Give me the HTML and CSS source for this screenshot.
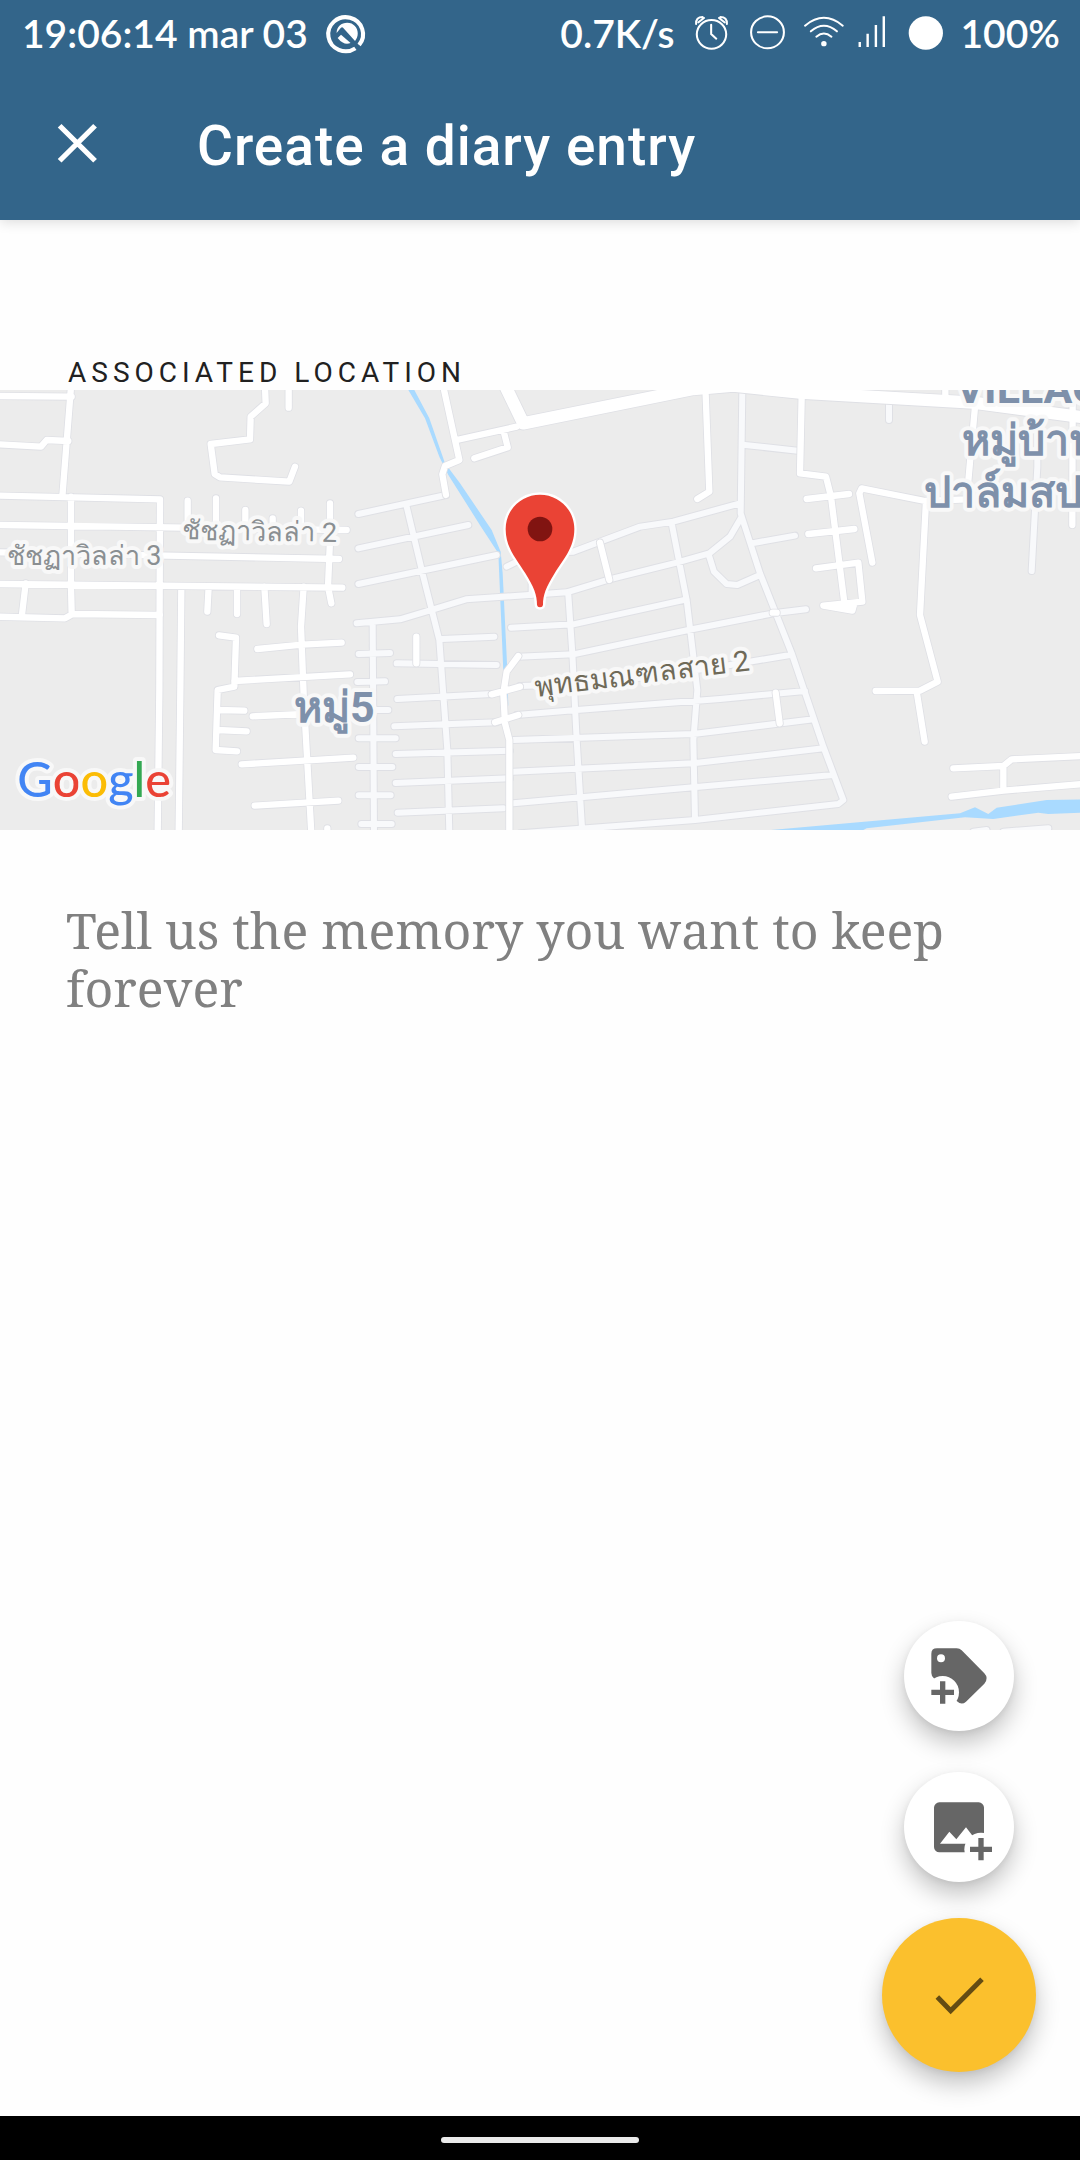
FILE: index.html
```html
<!DOCTYPE html>
<html lang="en">
<head>
<meta charset="utf-8">
<meta name="viewport" content="width=device-width, initial-scale=1">
<title>Create a diary entry</title>
<link rel="stylesheet" href="styles.css">
</head>
<body>
<header class="header">
  <div class="status">
    <span>19:06:14 mar 03</span>
    <svg class="status-icon" width="44" height="66" viewBox="945 0 129 198" preserveAspectRatio="none" aria-hidden="true">
      <path d="M1034 145A51 51 0 1 1 1045 135" fill="none" stroke="#fff" stroke-width="12"/>
      <path d="M979 99C979 80 993 68 1010 68C1029 68 1041 83 1041 100C1041 109 1038 117 1033 123L998 83Q995 80 991 84L979 99Z" fill="#fff"/>
      <path d="M982 114L992 104L1020 129Q1001 138 982 114Z" fill="#fff"/>
      <path d="M1026 126L1044 146" stroke="#33658a" stroke-width="7"/>
    </svg>
    <div class="status-right">
      <span>0.7K/s</span>
      <svg class="status-icon" width="39" height="66" viewBox="444 0 114 198" preserveAspectRatio="none" aria-hidden="true">
        <g fill="none" stroke="#fff" stroke-width="6" stroke-linecap="round"><circle cx="501" cy="103" r="43"/><path d="M500 74V102L515 116M456 72Q455 51 475 51M546 72Q547 51 527 51M463 67L479 54M539 67L523 54"/></g>
      </svg>
      <svg class="status-icon" width="39" height="66" viewBox="606 0 114 198" preserveAspectRatio="none" aria-hidden="true">
        <g fill="none" stroke="#fff" stroke-width="6" stroke-linecap="round"><circle cx="663" cy="97" r="48"/><path d="M635 97H691"/></g>
      </svg>
      <svg class="status-icon" width="36" height="66" viewBox="768 0 105 198" preserveAspectRatio="none" aria-hidden="true">
        <g fill="none" stroke="#fff" stroke-width="6" stroke-linecap="round"><path d="M771 77Q826 30 881 77M788 94Q826 61 864 94M804 110Q826 91 848 110"/></g><circle cx="826" cy="131" r="8" fill="#fff"/>
      </svg>
      <svg class="status-icon" width="34" height="66" viewBox="921 0 99 198" preserveAspectRatio="none" aria-hidden="true">
        <path d="M929 126V141M952 101V141M976 75V141M999 49V141" stroke="#fff" stroke-width="7"/>
      </svg>
      <svg class="status-icon" width="36" height="66" viewBox="1068 0 105 198" preserveAspectRatio="none" aria-hidden="true">
        <circle cx="1120" cy="99" r="50" fill="#fff"/>
      </svg>
      <span>100%</span>
    </div>
  </div>
  <div class="toolbar">
    <button class="close" type="button" aria-label="Close">
      <svg width="50" height="48" viewBox="151 357 144 144" preserveAspectRatio="none"><path d="M173 377L275 482M275 377L173 482" stroke="#fff" stroke-width="15"/></svg>
    </button>
    <h1 class="title">Create a diary entry</h1>
  </div>
</header>
<main class="content">
  <h2 class="overline">ASSOCIATED LOCATION</h2>
  <svg class="map" viewBox="0 150 3240 1320" preserveAspectRatio="xMidYMid slice" role="img" aria-label="Map of the associated location">
    <defs>
      <path id="lanes" d="M1075 522L1338 465M1075 625L1405 555M1075 732L1490 645M1070 850L1200 838L1300 808L1398 778L1700 757L1828 718L2030 668L2128 640L2190 590L2225 530M1220 500L1270 710L1318 900L1342 1230L1348 1480M1325 897L1483 890M1190 970L1490 975M1192 1077L1475 1062M1183 1159L1490 1147M1187 1242L1530 1232M1187 1329L1530 1315M1193 1418L1510 1405M1118 850L1122 1480M1076 942L1170 939M1072 1026L1155 1024M1080 1110H1165M1076 1195H1187M1076 1281H1177M1076 1366H1172M1084 1452H1175M1520 680L1600 640L1720 635L1920 560L2020 545L2220 490M1595 700V765M1705 765L1717 940L1730 1200L1747 1480M2015 550L2060 780L2092 1050L2080 1200L2085 1440M1533 863L1720 853L2060 778M1555 950L1720 943L2065 870L2320 820L2418 808M1560 1038L1800 1030L2160 980L2370 945M1550 1125L1730 1110L2160 1077L2415 1053M1540 1200L2080 1182L2440 1138M1540 1295L2080 1270L2470 1225M1540 1390L2080 1342L2500 1305M1560 1480L2085 1440L2515 1392L2530 1380L2470 1220L2375 940L2280 700L2222 520L2227 150M2235 315L2400 333M2255 610L2385 587M2128 650L2142 695L2180 732L2212 735L2280 705M2667 190V240M3112 240V380L3095 693M2920 1475L2960 1470M3010 1475L3145 1465"/>
      <path id="streets" d="M-5 168L215 170M213 140L187 470M-5 313L123 320L140 300L205 303M795 140L797 190L752 230L750 298L632 312L644 402L660 412L868 425L885 380M866 140V203M-5 467L480 478L478 1050L473 1480M-5 555L1040 570M-5 637L1017 657M-5 732L1027 743M213 470V740L215 820M-5 830L195 835L218 822L480 825M77 730L65 832M563 482V560M648 475V560M736 510V560M818 535V560M903 512V560M990 490V600L984 740L994 790M544 740L541 1050L536 1480M626 740L622 815M711 740V822M793 740L800 852M911 740L903 860L912 1090L934 1480M657 886L708 893L703 1040L653 1050L647 1230L711 1234M772 927L905 914L1025 908M703 1023L1050 1003M653 1110L733 1112M653 1170L740 1174M758 1129L1000 1118M725 1273L1060 1253M764 1397L1015 1382M982 1465V1480M1330 140L1378 360L1335 378L1327 403L1338 465M1370 300L1550 260M1510 270L1523 322L1423 355M2117 165L2128 455L2092 477M1800 608L1828 720M1249 890V970M2405 170L2400 400L2478 410L2493 470L2532 780M2420 477L2547 462M2425 582L2563 567M2448 685L2575 668L2587 785L2470 797L2557 812L2563 790M2617 668L2578 460L2585 445L2775 483L2900 478L2925 200M2778 483L2760 825L2813 1025L2760 1052L2627 1053M2750 1055L2774 1205M3218 150L3217 555M2836 140V175M2327 1058L2339 1150M2318 818H2330M2860 1285L3010 1278L3035 1258L3250 1248M3010 1280V1350M2855 1370L3010 1352L3250 1332M1555 948L1520 995L1510 1060L1515 1150L1528 1200V1480M1475 1063L1560 1040M1485 1147L1555 1125"/>
      <path id="avenue" d="M1512 130L1570 250L2080 147L2200 137L2400 158L2920 188L3250 232"/>
    </defs>
    <rect y="150" width="3240" height="1320" fill="#ececec"/>
    <path class="water" d="M1225 150H1243L1288 235L1335 370L1380 430L1475 570L1502 635L1508 700L1521 970L1525 1100L1510 995L1495 640L1443 560L1345 405L1318 350L1275 235Z"/>
    <path class="water" d="M2290 1472L2880 1420L2925 1402L2965 1422L2990 1403L3140 1380L3250 1378V1418L3145 1422L3115 1418L2980 1437L2895 1432L2600 1465L2570 1480Z"/>
    <use href="#lanes" class="road casing"/>
    <use href="#lanes" class="road lane"/>
    <use href="#streets" class="road casing"/>
    <use href="#avenue" class="road avenue-casing"/>
    <use href="#streets" class="road street"/>
    <use href="#avenue" class="road avenue"/>
    <g class="label minor">
      <text x="546" y="598" transform="rotate(1 546 598)">ชัชฏาวิลล่า 2</text>
      <text x="20" y="674">ชัชฏาวิลล่า 3</text>
      <text class="route" x="1608" y="1070" transform="rotate(-7 1608 1070)">พุทธมณฑลสาย 2</text>
    </g>
    <g class="label place">
      <text x="882" y="1146">หมู่5</text>
      <text x="2868" y="190">VILLAGE</text>
      <text x="2886" y="345">หมู่บ้าน</text>
      <text x="2772" y="500">ปาล์มสปริง</text>
    </g>
    <path d="M1620 464C1563 464 1517 510 1517 567C1517 625 1551 658 1576 700C1602 742 1611 765 1611 795Q1612 802 1620 802Q1628 802 1629 795C1629 765 1638 742 1664 700C1689 658 1723 625 1723 567C1723 510 1677 464 1620 464Z" fill="#ea4335" stroke="#fff" stroke-width="14" paint-order="stroke"/>
    <circle cx="1620" cy="567" r="37" fill="#811411"/>
    <text class="brand" x="52" y="1370"><tspan fill="#4285f4">G</tspan><tspan fill="#ea4335">o</tspan><tspan fill="#fbbc05">o</tspan><tspan fill="#4285f4">g</tspan><tspan fill="#34a853">l</tspan><tspan fill="#ea4335">e</tspan></text>
  </svg>
  <textarea class="memory" aria-label="Memory" placeholder="Tell us the memory you want to keep forever"></textarea>
  <div class="actions">
    <button class="fab mini" type="button" aria-label="Add tag">
      <svg viewBox="132 93 330 330"><path fill="#666" d="M231 175H290Q299 175 305 181L373 250Q387 265 373 281L318 335Q305 347 291 334L221 264Q214 257 214 249V191Q214 175 231 175Z"/><circle cx="243" cy="205" r="12" fill="#fff"/><circle cx="248" cy="307" r="49" fill="#fff"/><path d="M248 274V341M214 307H282" stroke="#666" stroke-width="16"/></svg>
    </button>
    <button class="fab mini" type="button" aria-label="Add picture">
      <svg viewBox="132 545 330 330"><rect x="222" y="636" width="150" height="150" rx="16" fill="#666"/><path d="M240 760L268 724L289 747L318 711L356 760Z" fill="#fff"/><circle cx="363" cy="777" r="50" fill="#fff"/><path d="M363 743V810M330 777H396" stroke="#666" stroke-width="16"/></svg>
    </button>
    <button class="fab save" type="button" aria-label="Save entry">
      <svg viewBox="66 113 462 462"><path d="M232 350L272 391L366 297" fill="none" stroke="#644c13" stroke-width="15"/></svg>
    </button>
  </div>
</main>
<footer class="nav"><span class="handle"></span></footer>
</body>
</html>
```
FILE: styles.css
```css
* {
  box-sizing: border-box;
}

body {
  margin: 0;
  min-height: 100vh;
  display: flex;
  flex-direction: column;
  background: #fefefe;
  font-family: Roboto, "Noto Sans", sans-serif;
}

button {
  border: 0;
  padding: 0;
  background: none;
  cursor: pointer;
}

svg {
  display: block;
}

.header {
  background: #33658a;
  color: #fff;
  box-shadow: 0 2px 12px rgba(0, 0, 0, 0.14);
}

.status {
  display: flex;
  align-items: center;
  gap: 17px;
  height: 66px;
  padding: 0 20px 0 22px;
  font-family: Lato, "Noto Sans", sans-serif;
  font-size: 39px;
  font-weight: 600;
  white-space: nowrap;
}

.status-right {
  display: flex;
  align-items: center;
  gap: 17px;
  margin-left: auto;
}

.status-icon {
  flex: none;
  overflow: visible;
}

.toolbar {
  display: flex;
  align-items: center;
  gap: 95px;
  height: 154px;
  padding: 0 52px;
}

.title {
  margin: 0;
  padding-top: 6px;
  font-size: 55px;
  font-weight: 500;
  letter-spacing: 1px;
}

.content {
  flex: 1;
  position: relative;
  display: flex;
  flex-direction: column;
  padding-top: 136px;
}

.overline {
  margin: 0;
  padding-left: 68px;
  font-size: 28px;
  line-height: 34px;
  font-weight: 400;
  letter-spacing: 5px;
  color: #212121;
}

.map {
  width: 100%;
  height: 440px;
}

.water {
  fill: #a9daff;
}

.road {
  fill: none;
  stroke-linecap: round;
  stroke-linejoin: round;
}

.casing {
  stroke: #dfe0e5;
  stroke-width: 24px;
}

.lane {
  stroke: #f8f9fb;
  stroke-width: 18px;
}

.street {
  stroke: #fff;
  stroke-width: 19px;
}

.avenue-casing {
  stroke: #dfe0e5;
  stroke-width: 42px;
}

.avenue {
  stroke: #fff;
  stroke-width: 37px;
}

.label,
.brand {
  stroke: #f8f8f8;
  stroke-width: 24px;
  stroke-linejoin: round;
  paint-order: stroke;
}

.minor {
  fill: #8a8f92;
  font-size: 81px;
}

.route {
  fill: #6f6a58;
  font-size: 86px;
}

.place {
  fill: #7e90aa;
  font-size: 129px;
  font-weight: 700;
}

.brand {
  font-family: Lato, "Noto Sans", sans-serif;
  font-size: 146px;
  font-weight: 500;
}

.memory {
  flex: 1;
  width: 100%;
  padding: 71px 66px;
  border: 0;
  outline: 0;
  resize: none;
  background: transparent;
  color: #212121;
  font-family: "Noto Serif", "DejaVu Serif Condensed", "DejaVu Serif", serif;
  font-size: 50px;
  line-height: 58px;
}

.memory::placeholder {
  color: #808080;
  opacity: 1;
}

.actions {
  position: absolute;
  right: 44px;
  bottom: 44px;
  display: flex;
  flex-direction: column;
  align-items: center;
  gap: 36px;
}

.fab {
  border-radius: 50%;
  box-shadow: 0 12px 24px rgba(0, 0, 0, 0.24), 0 2px 6px rgba(0, 0, 0, 0.06);
}

.mini {
  width: 110px;
  height: 110px;
  background: #fff;
}

.mini + .mini {
  margin-top: 5px;
}

.save {
  width: 154px;
  height: 154px;
  background: #fbc02d;
}

.nav {
  display: flex;
  align-items: center;
  justify-content: center;
  height: 44px;
  padding-top: 4px;
  background: #000;
}

.handle {
  width: 198px;
  height: 6px;
  border-radius: 3px;
  background: #eaeaea;
}
```
